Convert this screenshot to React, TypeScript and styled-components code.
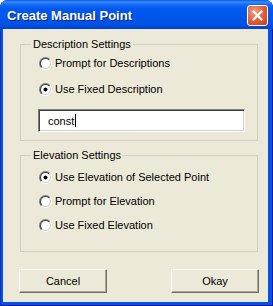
import React from "react";
import styled, { createGlobalStyle } from "styled-components";

const GlobalStyle = createGlobalStyle`
  html, body { margin: 0; padding: 0; background: #ffffff; }
  body { font-family: "Liberation Sans", Arial, sans-serif; }
  * { box-sizing: border-box; }
`;

const Window = styled.div`
  width: 273px;
  height: 306px;
  display: flex;
  flex-direction: column;
  background: #0553e6;
  border-radius: 8px 8px 0 0;
  overflow: hidden;
  box-shadow: inset 1px 0 0 #0831b5, inset -1px 0 0 #0018a0, inset 0 -1px 0 #0018a0;
`;

const TitleBar = styled.div`
  height: 29px;
  flex-shrink: 0;
  display: flex;
  align-items: center;
  padding: 0 5px 0 7px;
  background: linear-gradient(
    to bottom,
    #0a5be0 0%,
    #3a8cff 7%,
    #1a6ef8 14%,
    #0058ee 30%,
    #0056ea 60%,
    #0052e4 85%,
    #0042cc 100%
  );
`;

const Title = styled.span`
  flex: 1;
  color: #ffffff;
  font-family: "Liberation Sans", Arial, sans-serif;
  font-weight: bold;
  font-size: 13px;
  text-shadow: 1px 1px 0 #0a1e8a;
  padding-top: 1px;
`;

const CloseButton = styled.div`
  width: 21px;
  height: 21px;
  margin-top: 1px;
  border: 1px solid #ffffff;
  border-radius: 3px;
  background: radial-gradient(circle at 35% 30%, #f3a48a 0%, #e4643f 45%, #d4471f 80%, #c03a18 100%);
  display: flex;
  align-items: center;
  justify-content: center;
`;

const Frame = styled.div`
  flex: 1;
  display: flex;
  padding: 0 5px 4px 3px;
`;

const Client = styled.div`
  flex: 1;
  background: #ece9d8;
  display: flex;
  flex-direction: column;
  padding: 9px 9px 0 16px;
  font-family: "Liberation Sans", Arial, sans-serif;
  font-size: 11px;
  color: #000000;
`;

const Group = styled.fieldset<{ $pad: string; $mt: number }>`
  margin: ${(p) => p.$mt}px 1px 0 1px;
  padding: ${(p) => p.$pad};
  border: 1px solid #d0d0bf;
  border-radius: 0;
  min-inline-size: 0;
  display: flex;
  flex-direction: column;
`;

const Legend = styled.legend`
  padding: 0 2px;
  margin-left: -7px;
  line-height: 13px;
  height: 13px;
  font-size: 11px;
  color: #000000;
`;

const RadioRow = styled.div<{ $mt: number }>`
  display: flex;
  align-items: center;
  gap: 3px;
  height: 16px;
  padding-left: 1px;
  margin-top: ${(p) => p.$mt}px;
  line-height: 16px;
  white-space: nowrap;
`;

const TextField = styled.div`
  margin-top: 12px;
  height: 23px;
  background: #ffffff;
  border-top: 1px solid #808080;
  border-left: 1px solid #808080;
  border-bottom: 1px solid #ffffff;
  border-right: 1px solid #ffffff;
  box-shadow: inset 1px 1px 0 #404040, inset -1px -1px 0 #d4d0c8;
  display: flex;
  align-items: center;
  padding-left: 9px;
  font-size: 11px;
`;

const Caret = styled.span`
  display: inline-block;
  width: 1px;
  height: 13px;
  background: #000000;
  margin-left: 1px;
`;

const ButtonRow = styled.div`
  margin-top: 17px;
  display: flex;
  justify-content: space-between;
`;

const Button = styled.div`
  width: 88px;
  height: 24px;
  display: flex;
  align-items: center;
  justify-content: center;
  background: #ece9d8;
  border-top: 1px solid #ffffff;
  border-left: 1px solid #ffffff;
  border-bottom: 1px solid #716f64;
  border-right: 1px solid #716f64;
  box-shadow: inset -1px -1px 0 #aca899;
  font-size: 11px;
  padding-bottom: 1px;
`;

const Radio: React.FC<{ checked?: boolean }> = ({ checked }) => (
  <svg width="13" height="13" viewBox="0 0 13 13">
    <defs>
      <linearGradient id="rOuter" x1="0" y1="0" x2="1" y2="1">
        <stop offset="0.5" stopColor="#808080" />
        <stop offset="0.5" stopColor="#ffffff" />
      </linearGradient>
      <linearGradient id="rInner" x1="0" y1="0" x2="1" y2="1">
        <stop offset="0.5" stopColor="#404040" />
        <stop offset="0.5" stopColor="#d4d0c8" />
      </linearGradient>
    </defs>
    <circle cx="6.5" cy="6.5" r="6.5" fill="url(#rOuter)" />
    <circle cx="6.5" cy="6.5" r="5.5" fill="url(#rInner)" />
    <circle cx="6.5" cy="6.5" r="4.5" fill="#ffffff" />
    {checked && <circle cx="6.5" cy="6.5" r="2" fill="#000000" />}
  </svg>
);

export default function App() {
  return (
    <>
      <GlobalStyle />
      <Window>
        <TitleBar>
          <Title>Create Manual Point</Title>
          <CloseButton>
            <svg width="11" height="11" viewBox="0 0 11 11">
              <path d="M1.5 1.5 L9.5 9.5 M9.5 1.5 L1.5 9.5" stroke="#ffffff" strokeWidth="2.2" strokeLinecap="square" />
            </svg>
          </CloseButton>
        </TitleBar>
        <Frame>
          <Client>
            <Group $pad="4px 12px 8px 17px" $mt={0}>
              <Legend>Description Settings</Legend>
              <RadioRow $mt={0}>
                <Radio />
                <span>Prompt for Descriptions</span>
              </RadioRow>
              <RadioRow $mt={10}>
                <Radio checked />
                <span>Use Fixed Description</span>
              </RadioRow>
              <TextField>
                const
                <Caret />
              </TextField>
            </Group>
            <Group $pad="7px 12px 18px 17px" $mt={8}>
              <Legend>Elevation Settings</Legend>
              <RadioRow $mt={0}>
                <Radio checked />
                <span>Use Elevation of Selected Point</span>
              </RadioRow>
              <RadioRow $mt={8}>
                <Radio />
                <span>Prompt for Elevation</span>
              </RadioRow>
              <RadioRow $mt={8}>
                <Radio />
                <span>Use Fixed Elevation</span>
              </RadioRow>
            </Group>
            <ButtonRow>
              <Button>Cancel</Button>
              <Button>Okay</Button>
            </ButtonRow>
          </Client>
        </Frame>
      </Window>
    </>
  );
}
